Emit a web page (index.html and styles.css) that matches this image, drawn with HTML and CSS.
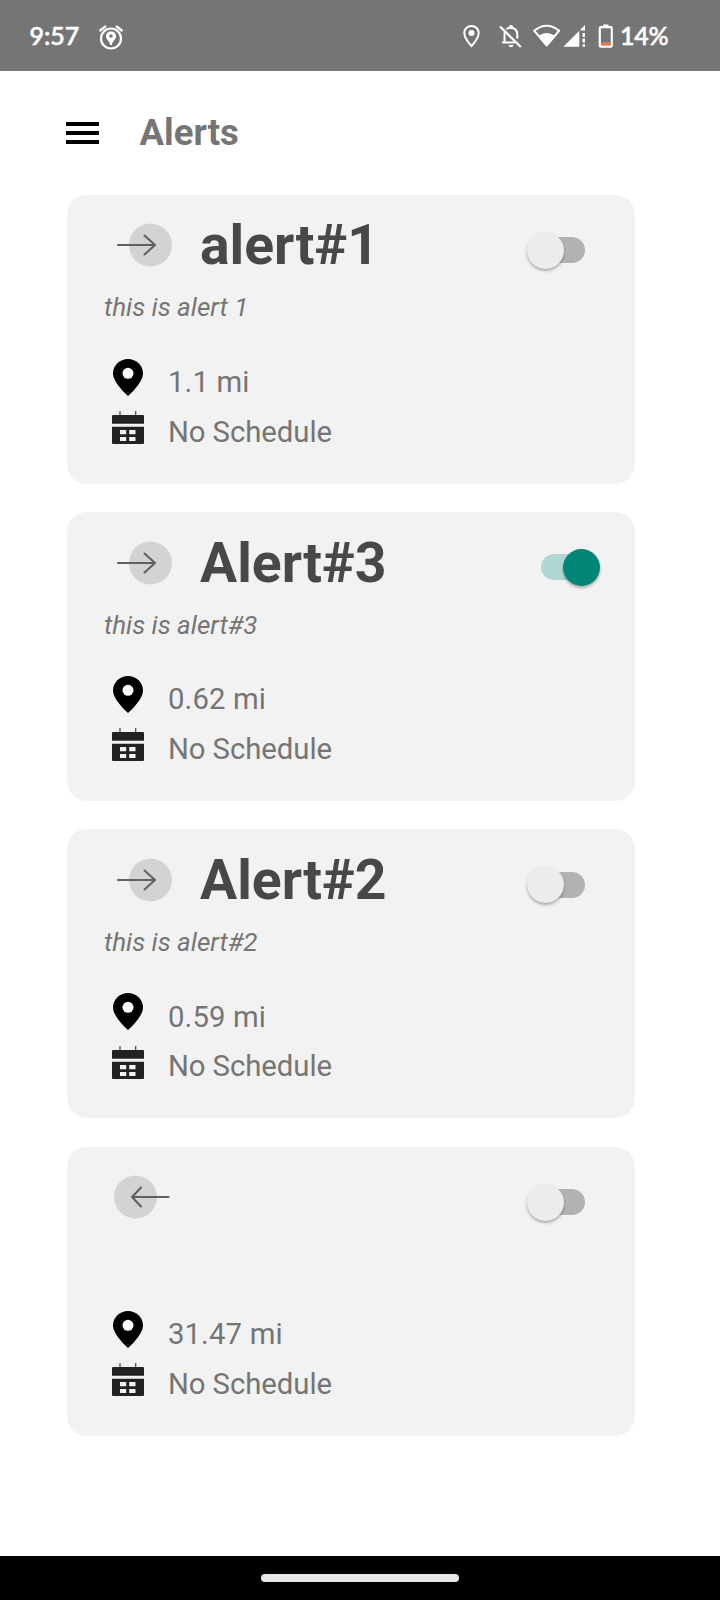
FILE: index.html
```
<!DOCTYPE html>
<html lang="en">
<head>
<meta charset="utf-8">
<title>Alerts</title>
<link rel="stylesheet" href="styles.css">
</head>
<body>
<svg class="defs" width="0" height="0">
  <symbol id="arrow-right" viewBox="0 0 60 44">
    <circle cx="36.5" cy="22" r="21.5" fill="#d3d3d3"/>
    <path d="M4 22H41M30.5 12.5L41 22L30.5 31.5" fill="none" stroke="#606060" stroke-width="2.1" stroke-linecap="round" stroke-linejoin="round"/>
  </symbol>
  <symbol id="arrow-left" viewBox="0 0 60 44">
    <circle cx="21.5" cy="22" r="21.5" fill="#d3d3d3"/>
    <path d="M54.500 22H18M27 12.500L18 22L27 31.500" fill="none" stroke="#606060" stroke-width="2.1" stroke-linecap="round" stroke-linejoin="round"/>
  </symbol>
  <symbol id="pin" viewBox="0 0 30 37">
    <path d="M15 0C6.700 0 0 6.500 0 14.500C0 24 15 37 15 37S30 24 30 14.500C30 6.500 23.300 0 15 0Z" fill="#000"/>
    <circle cx="15" cy="14.300" r="5.500" fill="#fff"/>
  </symbol>
  <symbol id="calendar" viewBox="0 0 32 33">
    <path d="M8 0V5M23.700 0V5" stroke="#444" stroke-width="1.2"/>
    <path d="M1 4H31Q32 4 32 5V12.700H0V5Q0 4 1 4Z" fill="#222"/>
    <path d="M0 15.700H32V32Q32 33 31 33H1Q0 33 0 32Z" fill="#222"/>
    <path d="M8 19h6.200v4.200H8zM17.200 19h6.300v4.200h-6.300zM8 26h6.200v4H8zM17.200 26h6.300v4h-6.300z" fill="#f2f2f2"/>
  </symbol>
</svg>

<header class="status">
  <span class="clock">9:57</span>
  <svg class="alarm" width="26" height="26" viewBox="0 0 26 26" fill="none" stroke="#fff">
    <circle cx="13" cy="14.500" r="10" stroke-width="2.200"/>
    <path d="M1.500 7L8 2M24.500 7L18 2" stroke-width="2.400"/>
    <path d="M13 7.500C10.200 7.500 8 9.500 8 12.200C8 15.500 11.800 17 12.200 21H13.800C14.200 17 18 15.500 18 12.200C18 9.500 15.800 7.500 13 7.500Z" fill="#fff" stroke="none"/>
    <circle cx="13" cy="12" r="1.800" fill="#757575" stroke="none"/>
  </svg>
  <svg class="indicators" width="153" height="26" viewBox="0 0 153 26">
    <path d="M8.500 2C4.300 2 1.300 5 1.300 9C1.300 14.200 8.500 22 8.500 22S15.700 14.200 15.700 9C15.700 5 12.700 2 8.500 2Z" fill="none" stroke="#fff" stroke-width="2"/>
    <circle cx="8.500" cy="8.900" r="3" fill="#fff"/>
    <path d="M43.300 5.200Q45 3.800 48 3.800Q54.300 4.300 54.300 11V14.500M41.800 8Q41.500 9 41.500 11V18.500H52M39 18.500H42" fill="none" stroke="#fff" stroke-width="2"/>
    <path d="M37 2.500L57.800 23" stroke="#fff" stroke-width="2.200"/>
    <path d="M46 4V2.500Q46 1 48 1Q50 1 50 2.500V4ZM45.500 21H50.500Q50 23.300 48 23.300Q46 23.300 45.500 21Z" fill="#fff"/>
    <path d="M71.200 6.700Q83.700 -3.200 96.200 6.700L83.700 21.500Z" fill="none" stroke="#fff" stroke-width="2" stroke-linejoin="round"/>
    <path d="M75.500 11.700Q83.700 6.500 91.900 11.700L83.700 21.500Z" fill="#fff"/>
    <path d="M100.300 22.800L116.300 6.800V22.800ZM117.500 5.600L122 1V6.500H117.500ZM119.500 9h2.500v4h-2.500zM119.500 14.500h2.500v4h-2.500zM119.500 20.200h2.500v2.600h-2.500z" fill="#fff"/>
    <path d="M140 0.500H145.500V2.500H140Z" fill="#fff"/>
    <rect x="136.800" y="3.200" width="12" height="19.500" rx="1" fill="none" stroke="#fff" stroke-width="2.200"/>
    <rect x="138" y="18.300" width="9.600" height="2.900" fill="#e8794f"/>
  </svg>
  <span class="percent">14%</span>
</header>

<nav class="topbar">
  <div class="menu"><i></i><i></i><i></i></div>
  <h1 class="heading">Alerts</h1>
</nav>

<main class="list">
  <section class="card">
    <div class="head">
      <svg class="direction"><use href="#arrow-right"/></svg>
      <h2 class="title">alert#1</h2>
      <div class="switch"><span class="knob"></span></div>
    </div>
    <p class="note">this is alert 1</p>
    <div class="distance"><svg class="pin"><use href="#pin"/></svg><span>1.1 mi</span></div>
    <div class="schedule"><svg class="calendar"><use href="#calendar"/></svg><span>No Schedule</span></div>
  </section>
  <section class="card">
    <div class="head">
      <svg class="direction"><use href="#arrow-right"/></svg>
      <h2 class="title">Alert#3</h2>
      <div class="switch on"><span class="knob"></span></div>
    </div>
    <p class="note">this is alert#3</p>
    <div class="distance"><svg class="pin"><use href="#pin"/></svg><span>0.62 mi</span></div>
    <div class="schedule"><svg class="calendar"><use href="#calendar"/></svg><span>No Schedule</span></div>
  </section>
  <section class="card">
    <div class="head">
      <svg class="direction"><use href="#arrow-right"/></svg>
      <h2 class="title">Alert#2</h2>
      <div class="switch"><span class="knob"></span></div>
    </div>
    <p class="note">this is alert#2</p>
    <div class="distance"><svg class="pin"><use href="#pin"/></svg><span>0.59 mi</span></div>
    <div class="schedule"><svg class="calendar"><use href="#calendar"/></svg><span>No Schedule</span></div>
  </section>
  <section class="card">
    <div class="head">
      <svg class="direction"><use href="#arrow-left"/></svg>
      <h2 class="title"></h2>
      <div class="switch"><span class="knob"></span></div>
    </div>
    <p class="note"></p>
    <div class="distance"><svg class="pin"><use href="#pin"/></svg><span>31.47 mi</span></div>
    <div class="schedule"><svg class="calendar"><use href="#calendar"/></svg><span>No Schedule</span></div>
  </section>
</main>

<footer class="navbar"><div class="handle"></div></footer>
</body>
</html>
```
FILE: styles.css
```
* { box-sizing: border-box; }

body {
  margin: 0;
  width: 720px;
  height: 1600px;
  display: flex;
  flex-direction: column;
  background: #fff;
  font-family: Roboto, sans-serif;
  color: #757575;
  overflow: hidden;
}

h1, h2, p { margin: 0; }
svg { display: block; flex: none; }
.defs { position: absolute; }

.status {
  height: 70.5px;
  flex: none;
  display: flex;
  align-items: flex-start;
  padding: 24px 0 0 29.5px;
  background: #757575;
  color: #fff;
  font: 500 25px/23px Lato, sans-serif;
  -webkit-text-stroke: .6px #fff;
}
.clock { width: 68.5px; }
.indicators { margin-left: 338.500px; }
.percent { margin-left: 4.500px; letter-spacing: -.3px; }

.topbar {
  height: 124.300px;
  flex: none;
  display: flex;
  align-items: center;
  padding-left: 66px;
}
.menu {
  width: 33px;
  height: 22px;
  display: flex;
  flex-direction: column;
  justify-content: space-between;
}
.menu i { height: 4px; background: #000; }
.heading {
  margin-left: 40.500px;
  font-size: 36.500px;
  line-height: 44px;
  font-weight: 700;
}

.list {
  flex: 1;
  display: flex;
  flex-direction: column;
  gap: 28.600px;
  padding-left: 67.400px;
}
.card {
  width: 567.600px;
  height: 288.750px;
  flex: none;
  border-radius: 20px;
  background: #f2f2f2;
}
.head {
  height: 101.500px;
  display: flex;
  align-items: center;
  padding: 0 49.700px 0 46.600px;
}
.direction { width: 60px; height: 44px; margin-top: -.5px; }
.title {
  flex: 1;
  margin: 1.500px 0 0 26px;
  font-size: 55.300px;
  line-height: 64px;
  font-weight: 700;
  color: #484848;
}
.switch {
  width: 44.500px;
  height: 26px;
  margin-top: 9px;
  border-radius: 13px;
  background: #b2b2b2;
  position: relative;
}
.knob {
  position: absolute;
  top: -5.500px;
  left: -13.500px;
  width: 37px;
  height: 37px;
  border-radius: 50%;
  background: #ececec;
  box-shadow: 0 2px 3px rgba(0, 0, 0, .3);
}
.on { background: #b2d7d2; }
.on .knob { left: 22px; background: #008577; }

.note {
  height: 62px;
  padding-left: 36.500px;
  font-size: 26px;
  line-height: 23px;
  font-style: italic;
}
.distance, .schedule {
  display: flex;
  align-items: flex-start;
  font-size: 29.300px;
  line-height: 34px;
}
.distance { height: 53px; padding-left: 45.500px; }
.distance span { padding: 6.800px 0 0 25px; letter-spacing: .15px; }
.pin { width: 30px; height: 37px; margin-top: .3px; }
.schedule { padding-left: 44.500px; }
.schedule span { padding: 3.500px 0 0 24px; letter-spacing: -.05px; }
.calendar { width: 32px; height: 33px; margin-top: -.3px; }

.navbar {
  height: 44px;
  flex: none;
  display: flex;
  align-items: center;
  justify-content: center;
  background: #000;
}
.handle { width: 198px; height: 7.500px; border-radius: 4px; background: #e8e8e8; }
```
